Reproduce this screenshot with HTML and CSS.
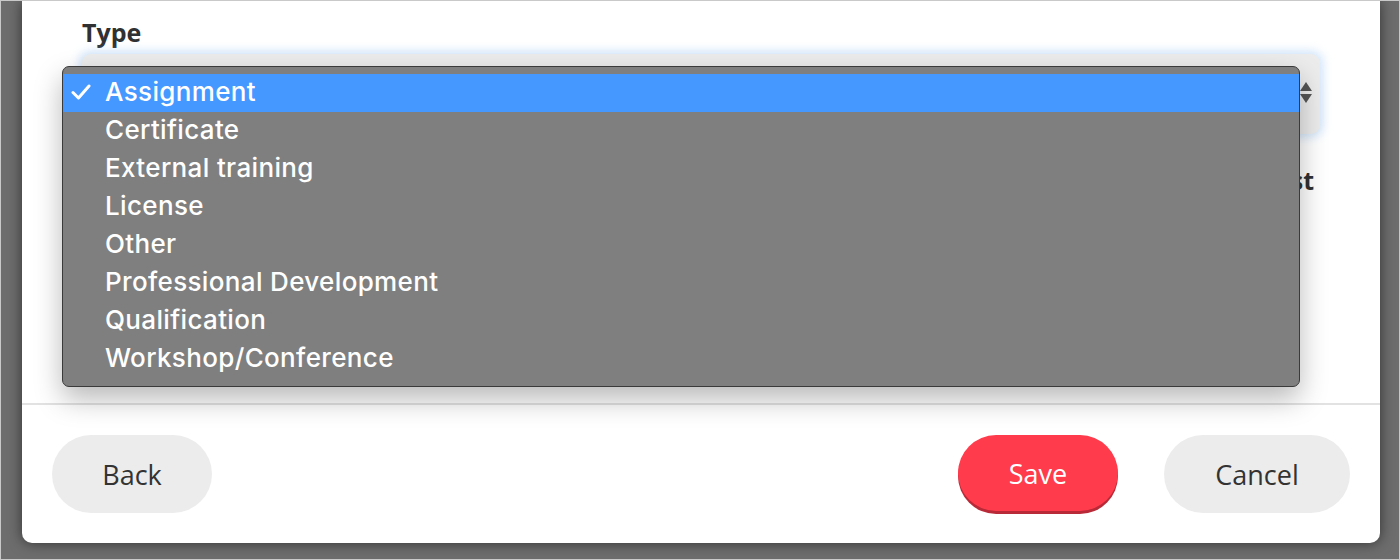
FILE: index.html
```html
<!DOCTYPE html>
<html lang="en">
  <head>
    <meta charset="UTF-8" />
    <meta name="viewport" content="width=device-width, initial-scale=1.0" />
    <title>Add record</title>
    <link rel="stylesheet" href="styles.css">
  </head>
  <body>
    <div class="modal">
      <div class="modal-body">
        <div class="form-group">
          <label class="label" for="type">Type</label>
          <div class="select">
            <span class="stepper">
              <span class="up"></span>
              <span class="down"></span>
            </span>
            <ul class="menu">
              <li class="selected">
                <svg class="check" width="20" height="16" viewBox="0 0 20 16">
                  <path d="M2 8.5 L7.5 14 L18 2" fill="none" stroke="#fff" stroke-width="3" stroke-linecap="round" stroke-linejoin="round" />
                </svg>
                Assignment
              </li>
              <li>Certificate</li>
              <li>External training</li>
              <li>License</li>
              <li>Other</li>
              <li>Professional Development</li>
              <li>Qualification</li>
              <li>Workshop/Conference</li>
            </ul>
          </div>
        </div>
        <div class="form-row">
          <div class="label">Cost</div>
        </div>
      </div>
      <div class="modal-footer">
        <button class="btn">Back</button>
        <div class="right">
          <button class="btn btn-save">Save</button>
          <button class="btn btn-cancel">Cancel</button>
        </div>
      </div>
    </div>
  </body>
</html>
```

FILE: styles.css
```css
html,
body {
  margin: 0;
  height: 560px;
  overflow: hidden;
}
body {
  box-sizing: border-box;
  border: 1px solid #c9c9c9;
  background: #6d6d6d;
  font-family: "Open Sans", sans-serif;
  color: #333;
}

.modal {
  margin-left: 21px;
  width: 1358px;
  height: 542px;
  background: #fff;
  border-radius: 0 0 10px 10px;
  box-shadow: 0 0 14px rgba(0, 0, 0, 0.55);
  display: flex;
  flex-direction: column;
}

.modal-body {
  padding: 14px 60px 0;
  height: 388px;
  border-bottom: 2px solid #e2e2e2;
}

.label {
  font-size: 25px;
  font-weight: bold;
  color: #2f3133;
  line-height: 34px;
}

.form-group .label {
  display: block;
  margin-bottom: 5px;
}

.select {
  position: relative;
  height: 80px;
  background: #ececec;
  border-radius: 9px;
  box-shadow: 0 0 10px 3px rgba(150, 195, 245, 0.45);
}

.stepper {
  position: absolute;
  right: 8px;
  top: 28px;
  display: flex;
  flex-direction: column;
  gap: 3px;
}
.stepper .up,
.stepper .down {
  width: 0;
  height: 0;
  border-left: 6px solid transparent;
  border-right: 6px solid transparent;
}
.stepper .up {
  border-bottom: 9px solid #555;
}
.stepper .down {
  border-top: 9px solid #555;
}

.menu {
  position: absolute;
  left: -20px;
  top: 12px;
  width: 1236px;
  margin: 0;
  padding: 7px 0 8px;
  list-style: none;
  background: #7f7f7f;
  border: 1px solid #3a3a3a;
  border-radius: 7px;
  box-shadow: 0 12px 28px rgba(0, 0, 0, 0.28);
  font-family: Inter, "Noto Sans", sans-serif;
  font-size: 26px;
  font-weight: 500;
  letter-spacing: 0.35px;
  color: #fff;
  z-index: 2;
}
.menu li {
  position: relative;
  height: 38px;
  line-height: 36px;
  padding-left: 42px;
}
.menu li.selected {
  background: #4598ff;
}
.check {
  position: absolute;
  left: 8px;
  top: 10px;
}

.form-row {
  display: flex;
  justify-content: flex-end;
  margin-top: 29px;
  padding-right: 6px;
}

.modal-footer {
  flex: 1;
  display: flex;
  justify-content: space-between;
  align-items: flex-start;
  padding: 30px 30px 0;
}
.right {
  display: flex;
  gap: 46px;
}

.btn {
  height: 78px;
  min-width: 160px;
  padding: 0 49px;
  border: none;
  border-radius: 39px;
  background: #ececec;
  color: #333;
  font-family: "Open Sans", sans-serif;
  font-size: 27px;
}
.btn-save {
  height: 76px;
  background: #ff3b4c;
  color: #fff;
  box-shadow: 0 3px 0 #b92a38;
}
.btn-cancel {
  min-width: 186px;
}
```
